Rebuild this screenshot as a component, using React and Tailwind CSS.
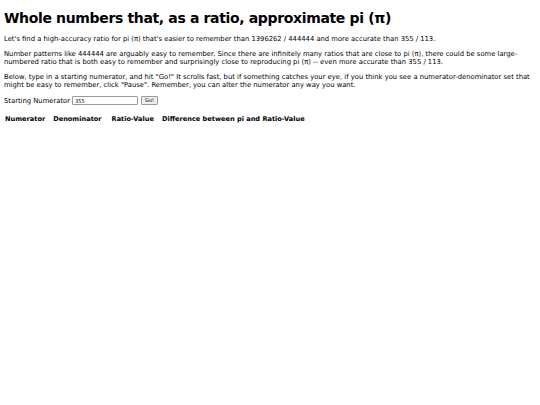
export default function App() {
  return (
    <div className="min-h-[405px] bg-white px-[4px] pt-[9px] text-black" style={{ fontFamily: '"DejaVu Sans", Verdana, sans-serif' }}>
      <h1 className="text-[14px] font-bold leading-[18px] tracking-[-0.35px] mb-[8px]">Whole numbers that, as a ratio, approximate pi (π)</h1>
      <p className="text-[6.8px] leading-[8px] mb-[7px]">
        Let's find a high-accuracy ratio for pi (π) that's easier to remember than 1396262 / 444444 and more accurate than 355 / 113.
      </p>
      <p className="text-[6.8px] leading-[8px] mb-[7px]">
        Number patterns like 444444 are arguably easy to remember. Since there are infinitely many ratios that are close to pi (π), there could be some large-numbered ratio that is both easy to remember and surprisingly close to reproducing pi (π) -- even more accurate than 355 / 113.
      </p>
      <p className="text-[6.8px] leading-[8px] mb-[7px]">
        Below, type in a starting numerator, and hit "Go!" It scrolls fast, but if something catches your eye, if you think you see a numerator-denominator set that might be easy to remember, click "Pause". Remember, you can alter the numerator any way you want.
      </p>
      <div className="flex items-center text-[6.8px] leading-[8px]">
        <span>Starting Numerator</span>
        <input
          defaultValue="355"
          className="ml-[2px] w-[66px] h-[9px] border border-[#9a9a9a] px-[2px] text-[5px] leading-[7px] rounded-[1px] outline-none"
        />
        <button className="ml-[3px] h-[9px] px-[3px] border border-[#9a9a9a] bg-[#efefef] rounded-[1px] text-[5px] leading-[7px]">Go!</button>
      </div>
      <table className="mt-[9px] text-[6.6px] leading-[8px] font-bold border-collapse">
        <thead>
          <tr>
            <th className="pl-[1px] pr-[8px] py-[1px] text-left">Numerator</th>
            <th className="pr-[10px] py-[1px] text-left">Denominator</th>
            <th className="pr-[8px] py-[1px] text-left">Ratio-Value</th>
            <th className="py-[1px] text-left">Difference between pi and Ratio-Value</th>
          </tr>
        </thead>
      </table>
    </div>
  );
}
